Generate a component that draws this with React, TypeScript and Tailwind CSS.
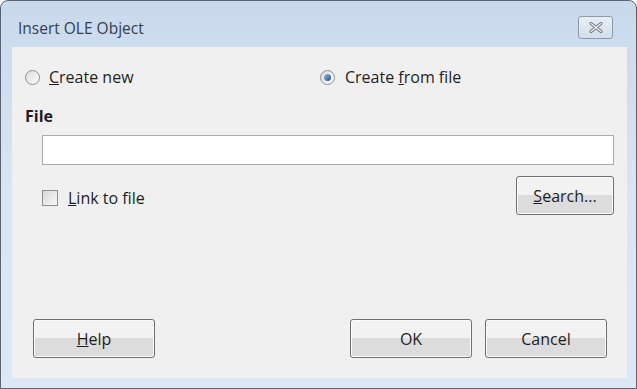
import React from 'react';

const Btn: React.FC<{ children: React.ReactNode; className?: string }> = ({ children, className = '' }) => (
  <button
    className={`flex items-center justify-center rounded-[3px] border border-[#707070] bg-gradient-to-b from-[#f2f2f2] from-50% to-[#dcdcdc] to-50% text-[16px] text-[#1e1e1e] shadow-[inset_0_0_0_1px_#fbfbfb] ${className}`}
  >
    {children}
  </button>
);

const App: React.FC = () => {
  return (
    <div className="h-[389px] w-[637px] bg-white font-['Open_Sans',sans-serif]">
      <div className="flex h-[389px] w-[637px] flex-col rounded-t-[8px] border border-[#5a6470] bg-gradient-to-b from-[#c9d9ec] via-[#d8e5f3] to-[#dbe8f5] pl-[11px] pr-[9px] pb-[10px]">
        {/* title bar */}
        <div className="flex h-[46px] shrink-0 items-center justify-between">
          <span className="pl-[6px] pt-[10px] text-[15.5px] text-[#33404e]">Insert OLE Object</span>
          <div className="mt-[6px] mr-[14px] flex h-[23px] w-[35px] items-center justify-center rounded-[3px] border border-[#8c9aab] bg-gradient-to-b from-[#e8eef6] to-[#d3deea]">
            <svg width="14" height="11" viewBox="0 0 14 11">
              <path d="M2 1.5 L12 9.5 M12 1.5 L2 9.5" stroke="#6b7480" strokeWidth="3" strokeLinecap="round" />
              <path d="M2 1.5 L12 9.5 M12 1.5 L2 9.5" stroke="#f4f6f8" strokeWidth="1.2" strokeLinecap="round" />
            </svg>
          </div>
        </div>
        {/* client area */}
        <div className="flex flex-1 flex-col bg-[#f0f0f0] pl-[13px] pr-[13px] text-[16px] text-[#1e1e1e]">
          <div className="mt-[18px] flex items-center">
            <div className="flex w-[295px] items-center">
              <span className="h-[15px] w-[15px] rounded-full border border-[#8e8f8f] bg-gradient-to-br from-[#dcdcdc] to-[#fdfdfd]" />
              <span className="ml-[9px]"><u>C</u>reate new</span>
            </div>
            <div className="flex items-center">
              <span className="flex h-[15px] w-[15px] items-center justify-center rounded-full border border-[#8e8f8f] bg-gradient-to-br from-[#dcdcdc] to-[#fdfdfd]">
                <span className="h-[7px] w-[7px] rounded-full bg-gradient-to-br from-[#8ec3ef] to-[#15508a]" />
              </span>
              <span className="ml-[10px]">Create <u>f</u>rom file</span>
            </div>
          </div>
          <div className="mt-[15px] font-bold">File</div>
          <div className="ml-[17px] mt-[7px] h-[30px] border border-[#ababab] bg-white" />
          <div className="ml-[17px] mt-[11px] flex items-start justify-between">
            <div className="mt-[10px] flex items-center">
              <span className="h-[16px] w-[16px] border border-[#8e8f8f] bg-gradient-to-br from-[#d8d8d8] to-[#f8f8f8]" />
              <span className="ml-[10px]"><u>L</u>ink to file</span>
            </div>
            <Btn className="h-[39px] w-[98px]"><span><u>S</u>earch...</span></Btn>
          </div>
          <div className="mt-auto mb-[20px] flex items-center">
            <Btn className="ml-[8px] h-[39px] w-[122px]"><span><u>H</u>elp</span></Btn>
            <Btn className="ml-auto h-[39px] w-[122px]">OK</Btn>
            <Btn className="ml-[13px] mr-[7px] h-[39px] w-[122px]">Cancel</Btn>
          </div>
        </div>
      </div>
    </div>
  );
};

export default App;
